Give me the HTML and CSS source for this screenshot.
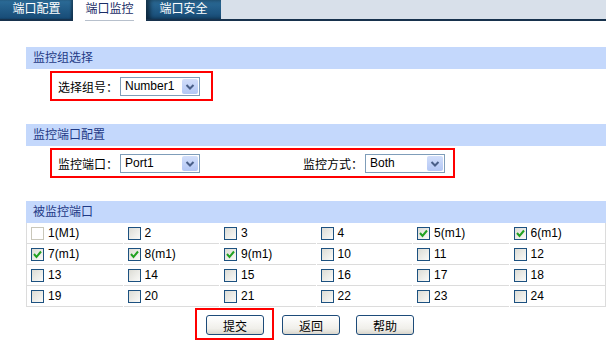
FILE: index.html
```html
<!DOCTYPE html>
<html lang="zh">
<head>
  <meta charset="UTF-8" />
  <title>端口监控</title>
  <link rel="stylesheet" href="styles.css">
</head>
<body>

  <div class="tabs">
    <div class="tab">端口配置</div>
    <div class="tab active"><span>端口监控</span></div>
    <div class="tab shadow">端口安全</div>
    <div class="tab-rest"></div>
  </div>

  <div class="content">

    <div class="section">
      <div class="sec-head">监控组选择</div>
      <div class="sec-body">
        <div class="mark group-box">
          <label>选择组号：</label>
          <div class="combo"><span>Number1</span><i class="arrow"><svg width="16" height="15" viewBox="0 0 16 15"><polyline points="4.5,6 8,9.5 11.5,6" fill="none" stroke="#4a5f88" stroke-width="2"/></svg></i></div>
        </div>
      </div>
    </div>

    <div class="section">
      <div class="sec-head">监控端口配置</div>
      <div class="sec-body">
        <div class="mark port-box">
          <label>监控端口：</label>
          <div class="combo"><span>Port1</span><i class="arrow"><svg width="16" height="15" viewBox="0 0 16 15"><polyline points="4.5,6 8,9.5 11.5,6" fill="none" stroke="#4a5f88" stroke-width="2"/></svg></i></div>
          <label class="mode-label">监控方式：</label>
          <div class="combo"><span>Both</span><i class="arrow"><svg width="16" height="15" viewBox="0 0 16 15"><polyline points="4.5,6 8,9.5 11.5,6" fill="none" stroke="#4a5f88" stroke-width="2"/></svg></i></div>
        </div>
      </div>
    </div>

    <div class="section last">
      <div class="sec-head">被监控端口</div>
      <div class="ports">
        <div class="cell"><span class="cb disabled"></span>1(M1)</div>
        <div class="cell"><span class="cb"></span>2</div>
        <div class="cell"><span class="cb"></span>3</div>
        <div class="cell"><span class="cb"></span>4</div>
        <div class="cell"><span class="cb on"><svg width="11" height="11" viewBox="0 0 11 11"><polyline points="2,5 4.5,8 9,2.5" fill="none" stroke="#21a121" stroke-width="2"/></svg></span>5(m1)</div>
        <div class="cell"><span class="cb on"><svg width="11" height="11" viewBox="0 0 11 11"><polyline points="2,5 4.5,8 9,2.5" fill="none" stroke="#21a121" stroke-width="2"/></svg></span>6(m1)</div>
        <div class="cell"><span class="cb on"><svg width="11" height="11" viewBox="0 0 11 11"><polyline points="2,5 4.5,8 9,2.5" fill="none" stroke="#21a121" stroke-width="2"/></svg></span>7(m1)</div>
        <div class="cell"><span class="cb on"><svg width="11" height="11" viewBox="0 0 11 11"><polyline points="2,5 4.5,8 9,2.5" fill="none" stroke="#21a121" stroke-width="2"/></svg></span>8(m1)</div>
        <div class="cell"><span class="cb on"><svg width="11" height="11" viewBox="0 0 11 11"><polyline points="2,5 4.5,8 9,2.5" fill="none" stroke="#21a121" stroke-width="2"/></svg></span>9(m1)</div>
        <div class="cell"><span class="cb"></span>10</div>
        <div class="cell"><span class="cb"></span>11</div>
        <div class="cell"><span class="cb"></span>12</div>
        <div class="cell"><span class="cb"></span>13</div>
        <div class="cell"><span class="cb"></span>14</div>
        <div class="cell"><span class="cb"></span>15</div>
        <div class="cell"><span class="cb"></span>16</div>
        <div class="cell"><span class="cb"></span>17</div>
        <div class="cell"><span class="cb"></span>18</div>
        <div class="cell"><span class="cb"></span>19</div>
        <div class="cell"><span class="cb"></span>20</div>
        <div class="cell"><span class="cb"></span>21</div>
        <div class="cell"><span class="cb"></span>22</div>
        <div class="cell"><span class="cb"></span>23</div>
        <div class="cell"><span class="cb"></span>24</div>
      </div>

      <div class="actions">
        <div class="mark submit-box"><button>提交</button></div>
        <button class="back">返回</button>
        <button class="help">帮助</button>
      </div>
    </div>

  </div>

</body>
</html>
```

FILE: styles.css
```css
body {
  margin: 0;
  font-family: "Liberation Sans", "Noto Sans CJK SC", sans-serif;
  font-size: 12px;
  color: #000;
  background: #fff;
}

/* tab bar */
.tabs {
  display: flex;
  height: 19px;
  border-bottom: 2px solid #17324d;
}

.tab {
  width: 73px;
  height: 19px;
  line-height: 19px;
  text-align: center;
  color: #fff;
  background: linear-gradient(#2c6c98, #174b76);
  box-shadow: inset -2px 0 2px rgba(0,0,0,0.35);
}

.tab.shadow {
  width: 75px;
  box-shadow: inset 4px 0 4px rgba(0,0,0,0.5);
}

.tab.active {
  background: #fff;
  color: #1a2d66;
  box-shadow: none;
  border-bottom: 2px solid #fff;
  position: relative;
}

.tab.active span {
  display: inline-block;
  border-bottom: 1px solid #b7c0cc;
  padding: 0 0 1px;
  line-height: 19px;
}

.tab-rest {
  flex: 1;
  background: #d8e0ea;
}

/* page content */
.content {
  padding: 26px 0 0 26px;
}

.section {
  margin-bottom: 23px;
}

.sec-head {
  height: 22px;
  line-height: 22px;
  padding-left: 7px;
  background: #c4d8fc;
  color: #1f3a86;
}

.sec-body {
  padding: 2px 0 0 24px;
}

.mark {
  border: 2px solid #f00;
}

.group-box,
.port-box {
  display: flex;
  align-items: center;
  height: 26px;
  padding-left: 6px;
}

.group-box {
  width: 153px;
}

.port-box {
  width: 395px;
}

.mode-label {
  margin-left: 103px;
}

.combo {
  display: flex;
  align-items: center;
  justify-content: space-between;
  width: 78px;
  height: 17px;
  margin-left: 2px;
  border: 1px solid #7f9db9;
  padding-left: 4px;
  box-sizing: content-box;
  width: 74px;
}

.combo .arrow {
  width: 16px;
  height: 15px;
  margin-right: 1px;
  border-radius: 2px;
  background: linear-gradient(#d2defa, #b3c7f5);
  display: flex;
}

/* port grid */
.ports {
  display: grid;
  grid-template-columns: repeat(6, 1fr);
  column-gap: 1px;
  border-left: 1px solid #dcdcdc;
  border-right: 1px solid #dcdcdc;
}

.cell {
  display: flex;
  align-items: center;
  height: 20px;
  border-bottom: 1px solid #dcdcdc;
  padding-left: 4px;
}

.cb {
  width: 11px;
  height: 11px;
  margin-right: 4px;
  border: 1px solid #1c5180;
  background: linear-gradient(135deg, #dcdcd5, #fafaf8);
  display: flex;
}

.cb.disabled {
  border-color: #c9c7ba;
  background: #fff;
}

/* buttons */
.actions {
  display: flex;
  align-items: center;
  padding: 1px 0 0 169px;
}

.submit-box {
  padding: 5px 8px 3px 9px;
  margin-right: 8px;
}

button {
  width: 58px;
  height: 20px;
  padding: 0;
  font: inherit;
  color: #000;
  border: 1px solid #1d4b79;
  border-radius: 3px;
  background: linear-gradient(#ffffff, #f0efea 70%, #d9d6cc);
}

.back {
  margin-right: 16px;
  margin-top: 2px;
}

.help {
  margin-top: 2px;
}
```
